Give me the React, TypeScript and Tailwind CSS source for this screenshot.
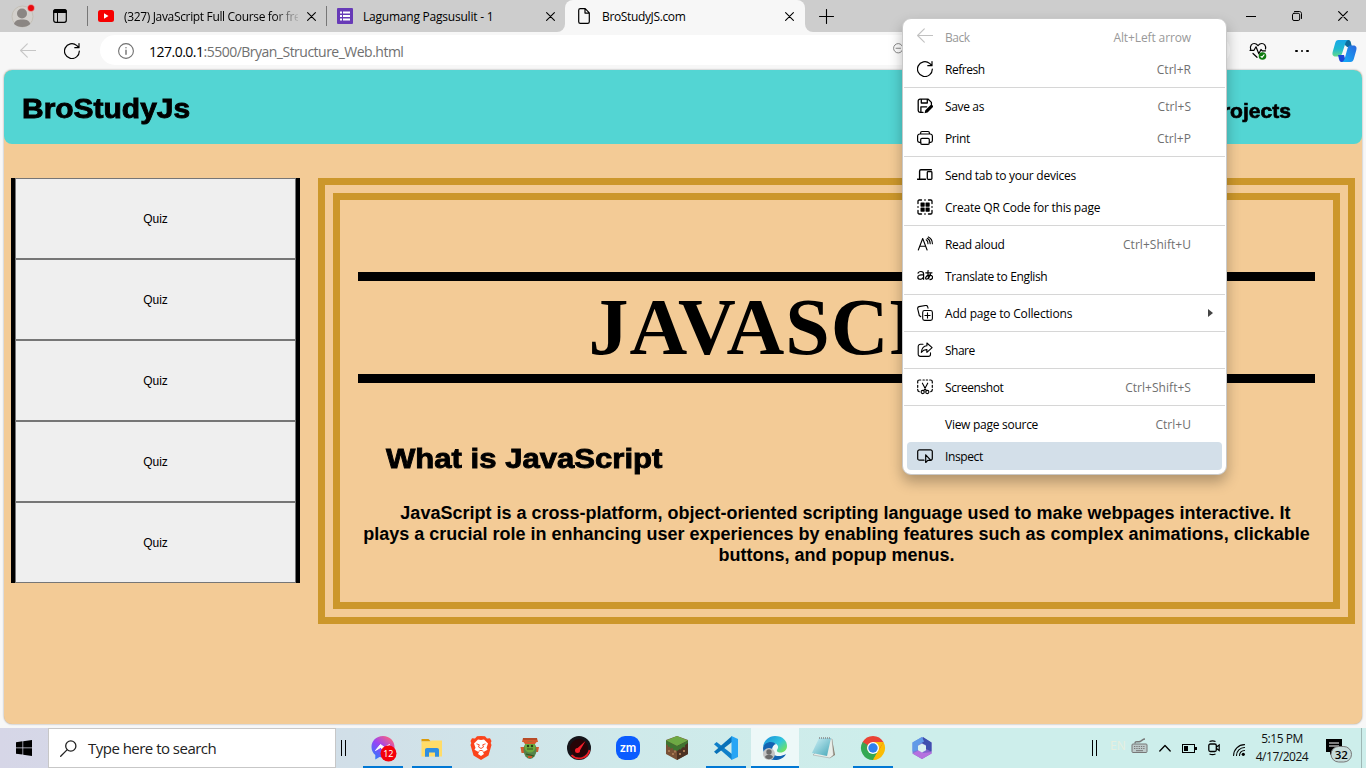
import React from "react";

type IconProps = { children: React.ReactNode; size?: number; className?: string; box?: string };

function Icon({ children, size = 16, className = "", box = "0 0 16 16" }: IconProps) {
  return (
    <svg
      width={size}
      height={size}
      viewBox={box}
      fill="none"
      stroke="currentColor"
      strokeWidth={1.1}
      strokeLinecap="round"
      strokeLinejoin="round"
      className={`block shrink-0 ${className}`}
    >
      {children}
    </svg>
  );
}

const BackIcon = ({ className = "" }) => (
  <Icon className={className}><path d="M15.8 7.5H.6M7.3.9.6 7.5l6.7 6.7" /></Icon>
);
const RefreshIcon = () => (
  <Icon><path d="M15.3 8A7.4 7.4 0 1 1 12.6 2.4l2 1.9M15 .6v4.1h-4.2" strokeWidth={1.2} /></Icon>
);
const CloseIcon = ({ size = 9 }) => (
  <Icon size={size} box="0 0 9 9"><path d="m.6.6 7.8 7.8M8.4.6.6 8.4" strokeWidth={1.1} /></Icon>
);

const icons: Record<string, React.ReactNode> = {
  back: <BackIcon className="-mt-px" />,
  refresh: <RefreshIcon />,
  save: (
    <Icon>
      <path d="M6 14.4H3A1.8 1.8 0 0 1 1.2 12.6V3A1.8 1.8 0 0 1 3 1.2h8.2L14.4 4.4v2.2M4.3 1.4V5h6V1.4M3.9 14V8.8h5.8" strokeWidth={1.3} />
      <path d="m7.500 15.300.8-3 5-5a1.500 1.500 0 0 1 2.200 2.200l-5 5z" fill="currentColor" stroke="none" />
    </Icon>
  ),
  print: (
    <Icon>
      <path d="M3.700 12.400H2.300A1.800 1.800 0 0 1 .6 10.600V6.200A2.200 2.200 0 0 1 2.800 4h10.400a2.200 2.200 0 0 1 2.200 2.200v4.400a1.800 1.800 0 0 1-1.800 1.800h-1.300M3.600 4V2.900a1.400 1.400 0 0 1 1.400-1.400h6a1.400 1.400 0 0 1 1.400 1.400V4" strokeWidth={1.2} />
      <rect x="3.700" y="8.300" width="8.600" height="6.100" rx="1.300" strokeWidth={1.2} />
    </Icon>
  ),
  devices: (
    <Icon>
      <path d="M2.600 11V4.200c0-.9.4-1.500 1.300-1.500H14.400M.5 12.300h8" strokeWidth={1.4} />
      <rect x="10.300" y="4.700" width="4.600" height="7.600" rx=".8" strokeWidth={1.3} />
    </Icon>
  ),
  qr: (
    <Icon>
      <path d="M1 4.500V2.200C1 1.500 1.500 1 2.200 1h2.300M11.500 1h2.300c.7 0 1.200.5 1.200 1.200v2.300M15 11.500v2.300c0 .7-.5 1.200-1.200 1.200h-2.300M4.500 15H2.200C1.500 15 1 14.500 1 13.800v-2.300" strokeWidth={1.3} />
      <path d="M1 7.400v1.200M15 7.400v1.200M7.400 1h1.200M7.400 15h1.200" strokeWidth={1} />
      <g fill="currentColor" stroke="none">
        <rect x="3.500" y="3.500" width="4.200" height="4.200" rx=".6" />
        <rect x="8.500" y="3.500" width="4.200" height="4.200" rx=".6" />
        <rect x="3.500" y="8.500" width="4.200" height="4.200" rx=".6" />
        <rect x="8.500" y="8.500" width="4.200" height="4.200" rx=".6" />
      </g>
    </Icon>
  ),
  read: (
    <Icon>
      <path d="M1.300 14 5.700 2.500 10.100 14M2.800 10.300h5.800M9.200 3.800q1.900 1.200 1.800 4M11.300.9q4.100 1.900 4.100 6.900M10.200 2.300q3 1.600 3 5.400" strokeWidth={1.1} />
    </Icon>
  ),
  translate: (
    <Icon>
      <path d="M1 5.100q.9-1.600 2.900-1.600Q6.600 3.500 6.600 6v5.300M6.600 6.700C3 6.700.8 7.200.8 9.200c0 2.600 4.300 3 5.800-.2M8.800 4.800h6.200M11.100 2.500c-.4 3-.2 5.800.7 8.300M13.500 6c-.5 3-2.500 5.200-4 5.200-1.700 0-1-4 3-4 4.200 0 3.900 3.900.5 4.500" strokeWidth={1.2} />
    </Icon>
  ),
  collections: (
    <Icon>
      <rect x="5.700" y="5.500" width="9.700" height="9.900" rx="1.900" />
      <path d="M10.500 7.900v5.200M7.900 10.500h5.200M3.800 11.700 2.300 10.500.7 3.800A1.900 1.900 0 0 1 2 1.600L8.500.5a1.900 1.900 0 0 1 2.200 1.300l.3 1.400" strokeWidth={1.1} />
    </Icon>
  ),
  share: (
    <Icon>
      <path d="M6 2.200H3.500A2.200 2.200 0 0 0 1.200 4.400v7.800a2.200 2.200 0 0 0 2.200 2.200h7.900a2.200 2.200 0 0 0 2.200-2.200v-1.400M9.900 1l5.200 4.700-5.200 4.700V7.600C7 7.500 5.700 8.500 4.300 10.300 4.700 6.300 6.500 4 9.900 3.700z" strokeWidth={1.1} />
    </Icon>
  ),
  screenshot: (
    <Icon>
      <path d="M.7 4V2.800C.7 1.600 1.300 1 2.500 1H3.700M6 1h1.300M9.300 1h1.300M12.700 1h.8c1.200 0 1.800.6 1.800 1.800V4M15.300 6.300v2M15.300 10.300v.5c0 1-.6 1.700-1.500 1.800M.7 6.300v2M.7 10.300v.5c0 1 .6 1.700 1.500 1.800" strokeWidth={1.2} />
      <path d="m5.400 4.200 4 7.500M10.700 4.200l-4 7.500" strokeWidth={1.1} />
      <circle cx="5.700" cy="13" r="1.600" /><circle cx="10.300" cy="13" r="1.600" />
    </Icon>
  ),
  inspect: (
    <Icon>
      <path d="M7 12.200H2.500a1.800 1.800 0 0 1-1.800-1.800V3.600a1.800 1.800 0 0 1 1.800-1.800h11a1.800 1.800 0 0 1 1.800 1.800v6.800c0 .9-.5 1.500-1.200 1.700" strokeWidth={1.2} />
      <path d="M8.700 6.800v7.700l2.100-2.200h3.100z" strokeWidth={1.2} />
    </Icon>
  ),
};

type Item = { icon?: string; label: string; keys?: string; track: string; ktrack?: string; muted?: boolean; arrow?: boolean; active?: boolean };

const groups: Item[][] = [
  [
    { icon: "back", label: "Back", keys: "Alt+Left arrow", track: "tracking-[-0.5px]", ktrack: "tracking-[-0.12px]", muted: true },
    { icon: "refresh", label: "Refresh", keys: "Ctrl+R", track: "tracking-[-0.48px]" },
  ],
  [
    { icon: "save", label: "Save as", keys: "Ctrl+S", track: "tracking-[-0.35px]" },
    { icon: "print", label: "Print", keys: "Ctrl+P", track: "tracking-[-0.38px]" },
  ],
  [
    { icon: "devices", label: "Send tab to your devices", track: "tracking-[-0.26px]" },
    { icon: "qr", label: "Create QR Code for this page", track: "tracking-[-0.24px]" },
  ],
  [
    { icon: "read", label: "Read aloud", keys: "Ctrl+Shift+U", track: "tracking-[-0.35px]" },
    { icon: "translate", label: "Translate to English", track: "tracking-[-0.35px]" },
  ],
  [{ icon: "collections", label: "Add page to Collections", track: "tracking-[-0.18px]", arrow: true }],
  [{ icon: "share", label: "Share", track: "tracking-[-0.5px]" }],
  [{ icon: "screenshot", label: "Screenshot", keys: "Ctrl+Shift+S", track: "tracking-[-0.42px]" }],
  [
    { label: "View page source", keys: "Ctrl+U", track: "tracking-[-0.27px]" },
    { icon: "inspect", label: "Inspect", track: "tracking-[-0.38px]", active: true },
  ],
];

function ContextMenu() {
  return (
    <div className="absolute left-[902px] top-[18px] z-10 h-[457px] w-[325px] rounded-[9px] border border-[#c9c9c9] bg-white pt-0.5 text-[12px] shadow-[0_7px_14px_rgba(0,0,0,0.28)]">
      {groups.map((group, g) => (
        <div key={g}>
          {g > 0 && <div className="mx-px mb-0.5 mt-0.5 h-px bg-[#d6d6d6]" />}
          {group.map((it) => (
            <div key={it.label} className="h-8 px-1 py-0.5">
              <div className={`flex h-7 items-center rounded pl-2.5 pr-[7px] ${it.active ? "bg-[#d3dfe9]" : ""} ${it.muted ? "text-[#999]" : "text-black"}`}>
                <span className={`mr-3 size-4 ${it.muted ? "opacity-60" : ""}`}>{it.icon && icons[it.icon]}</span>
                <span className={`whitespace-nowrap pt-0.5 ${it.track}`}>{it.label}</span>
                <span className={`ml-auto mr-6 whitespace-nowrap pt-0.5 ${it.muted ? "" : "text-[#707070]"} ${it.ktrack ?? "tracking-[0.04px]"}`}>{it.keys}</span>
                {it.arrow && (
                  <svg width="5" height="8" viewBox="0 0 5 8" className="-ml-[15px] mr-0.5"><path d="M0 0v8l5-4z" fill="#444" /></svg>
                )}
              </div>
            </div>
          ))}
        </div>
      ))}
    </div>
  );
}

function TabStrip() {
  return (
    <div className="flex h-8 bg-[#f7f7f7] text-[12px] text-black">
      <div className="flex w-[565px] items-center rounded-br-lg bg-[#cdcdcd]">
        <svg width="24" height="26" viewBox="0 0 24 26" className="ml-[11px] mr-[17px]">
          <circle cx="11.500" cy="13.500" r="10.500" fill="#d3d0cc" stroke="#c4c0b7" />
          <circle cx="11" cy="10.500" r="5" fill="#8b8683" />
          <path d="M3 21c.8-3.200 3.400-4.500 8.200-4.500s7.300 1.300 8.100 4.500c-2 2-4.700 3-8.100 3s-6-1-8.200-3z" fill="#8b8683" />
          <circle cx="20" cy="5" r="3.500" fill="#e8090e" stroke="#e6d6d6" strokeWidth=".5" />
        </svg>
        <svg width="16" height="16" viewBox="0 0 16 16">
          <rect x="1.700" y="1.700" width="12.600" height="12.600" rx="2" fill="none" stroke="#000" strokeWidth="1.200" />
          <path d="M1.200 5V3A2 2 0 0 1 3 1.200h10A2 2 0 0 1 14.800 3v2z" />
          <path d="M5.500 4v10" stroke="#000" />
        </svg>
        <div className="ml-[19px] h-5 w-px bg-[#777]" />
        <svg width="16" height="12" viewBox="0 0 16 12" className="ml-2.5 mr-2.5">
          <rect width="16" height="12" rx="2.500" fill="#f60000" /><path d="M6 3.200v5.600L10.500 6z" fill="#fff" />
        </svg>
        <span className="w-[174px] overflow-hidden whitespace-nowrap pt-px tracking-[-0.34px] [mask-image:linear-gradient(90deg,#000_150px,transparent_177px)]">(327) JavaScript Full Course for free</span>
        <span className="ml-[9px]"><CloseIcon /></span>
        <div className="ml-2.5 h-5 w-px bg-[#777]" />
        <svg width="16" height="16" viewBox="0 0 16 16" className="ml-2.5 mr-2.5">
          <rect width="16" height="16" rx="1" fill="#673ab7" />
          <path d="M3 4.500h2M6 4.500h7M3 8h2M6 8h7M3 11.500h2M6 11.500h7" stroke="#fff" strokeWidth="2" />
        </svg>
        <span className="w-[170px] whitespace-nowrap pt-px tracking-[-0.22px]">Lagumang Pagsusulit - 1</span>
        <span className="ml-[13px]"><CloseIcon /></span>
      </div>
      <div className="w-60 bg-[linear-gradient(#cdcdcd_12px,#f7f7f7_12px)]">
        <div className="flex h-8 items-center rounded-t-lg bg-[#f7f7f7] pl-[13px]">
          <Icon size={12} box="0 0 12 16" className="h-4"><path d="M.7 2.200c0-1 .6-1.600 1.600-1.600h4.900l4.100 4.200v9c0 1-.6 1.600-1.600 1.600H2.300c-1 0-1.600-.6-1.600-1.600zM7 .8v4.300h4" strokeWidth={1.2} /></Icon>
          <span className="ml-3 w-[171px] pt-px tracking-[-0.36px]">BroStudyJS.com</span>
          <span className="ml-[12px]"><CloseIcon /></span>
        </div>
      </div>
      <div className="flex flex-1 items-center rounded-bl-lg bg-[#cdcdcd] pl-[14px]">
        <Icon size={15} box="0 0 15 15"><path d="M7.500.5v14M.5 7.500h14" strokeWidth={1.1} /></Icon>
        <div className="ml-auto flex items-center pr-[18px]">
          <div className="mr-9 h-px w-2.5 bg-black" />
          <Icon size={10} box="0 0 10 10" className="mr-9"><rect x=".5" y="2.300" width="7.200" height="7.200" rx="1.500" strokeWidth={1} /><path d="M2.500.5h4.900c1.200 0 2.100.9 2.100 2.100v4.900" strokeWidth={1} /></Icon>
          <CloseIcon size={10} />
        </div>
      </div>
    </div>
  );
}

function Toolbar() {
  return (
    <div className="flex h-[38px] items-center bg-[#f7f7f7]">
      <span className="ml-5 text-[#c6c6c6]"><BackIcon /></span>
      <span className="ml-7"><RefreshIcon /></span>
      <div className="-mt-0.5 ml-5 flex h-[30px] w-[1130px] items-center rounded-full bg-white pl-[18px] text-[14px] text-[#707070]">
        <Icon className="mt-0.5"><circle cx="8" cy="8" r="7.400" /><path d="M8 7.200v4M8 4.700v.1" strokeWidth={1.4} /></Icon>
        <span className="ml-[15px] w-[300px] whitespace-nowrap pt-0.5 tracking-[-0.51px]"><span className="text-black">127.0.0.1</span>:5500/Bryan_Structure_Web.html</span>
        <Icon size={12} className="-mt-0.5 ml-[444px]"><circle cx="7" cy="7" r="6.200" /><path d="M4 7h6" /></Icon>
      </div>
      <Icon size={18} box="0 0 18 18" className="-ml-px mr-px translate-x-5">
        <path d="M1.700 7.500C.5 3.700 3 1.500 5.200 1.500c1.700 0 2.700.8 3.800 2.200 1.100-1.400 2.100-2.200 3.800-2.200 2.500 0 4.500 2.300 3.700 5.500M1 8.300h4l2-3.500 2.800 7L12 7.500l1.300 1.300h3.200M4 11.500l4 3.800" strokeWidth={1.2} />
        <circle cx="13.500" cy="14" r="3.800" fill="#0f7b0f" stroke="none" /><path d="m12 14.500 1 .8 2-2.500" stroke="#fff" />
      </Icon>
      <div className="ml-[47px] flex gap-[3px]">
        <i className="size-[2.5px] rounded-full bg-black" /><i className="size-[2.5px] rounded-full bg-black" /><i className="size-[2.5px] rounded-full bg-black" />
      </div>
      <svg width="25" height="24" viewBox="0 0 25 24" className="ml-[23px]">
        <defs>
          <linearGradient id="ca" x1="0" y1="0" x2="0" y2="1"><stop offset="0" stopColor="#19a7e8" /><stop offset=".55" stopColor="#1fb9cf" /><stop offset="1" stopColor="#66d98b" /></linearGradient>
          <linearGradient id="cb" x1="1" y1="0" x2="0" y2="1"><stop offset="0" stopColor="#2a67dc" /><stop offset="1" stopColor="#12b0fa" /></linearGradient>
        </defs>
        <path d="M12 1h4.500c1.700 0 2.200 1.500 2.600 3.500L20 8h-4c-2 0-3.500-2-4-7z" fill="#0b6c9d" />
        <path d="M6.500 1H16c-1.800.6-2.400 2.300-3 4.500l-2.600 8c-.8 2.500-1.700 4-4.200 4H3.500c-3 0-3.500-2.500-2.700-5L3.200 4C3.800 2.200 4.500 1 6.500 1z" fill="url(#ca)" />
        <path d="M6 16h6l2 7H9.500c-2.300 0-2.500-3.500-3.500-7z" fill="#1b46d6" />
        <path d="M18.500 6.500h3c3 0 3.500 2.500 2.700 5L21.800 20c-.6 2-1.600 3-3.300 3H10c1.800-.6 2.400-2.300 3-4.500l2.200-8c.7-2.500 1.300-4 3.300-4z" fill="url(#cb)" />
      </svg>
    </div>
  );
}

function WebPage() {
  return (
    <div className="mx-1 h-[654px] overflow-hidden rounded-lg bg-[#f3cb96] font-['Liberation_Sans',Arial,sans-serif] text-black shadow-[0_0_2px_rgba(0,0,0,0.4)]">
      <header className="flex h-[74px] items-center justify-between rounded-lg bg-[#53d5d3] pl-[18px] pr-[71px] font-bold">
        <h1 className="mt-[3px] origin-left scale-x-[1.07] text-[28px] [-webkit-text-stroke:0.9px_#000]">BroStudyJs</h1>
        <span className="mt-[9px] origin-right scale-x-[1.08] text-[19.5px] [-webkit-text-stroke:0.6px_#000]">Projects</span>
      </header>
      <div className="mt-[34px] flex items-start pl-[7px]">
        <nav className="flex w-[289px] flex-col border-x-4 border-black">
          {[0, 1, 2, 3, 4].map((n) => (
            <button key={n} className="h-[81px] border border-[#767676] bg-[#efefef] text-[12px]">Quiz</button>
          ))}
        </nav>
        <main className="ml-[18px] h-[446px] w-[1037px] border-[22px] border-double border-[#cc972b] px-[18px] pt-[72px] text-center">
          <h2 className="h-[111px] border-y-[9px] border-black font-['Liberation_Serif','Times_New_Roman',serif] text-[80px] font-bold leading-[93px] tracking-[1px]">JAVASCRIPT</h2>
          <h3 className="ml-7 mt-[60px] w-fit origin-left scale-x-[1.11] text-left text-[28px] font-bold leading-8 [-webkit-text-stroke:0.9px_#000]">What is JavaScript</h3>
          <p className="mt-[28px] indent-[18px] text-[18px] font-bold leading-[21px]">
            JavaScript is a cross-platform, object-oriented scripting language used to make webpages interactive. It plays a crucial role in enhancing user experiences by enabling features such as complex animations, clickable buttons, and popup menus.
          </p>
        </main>
      </div>
    </div>
  );
}

const art: { name: string; open?: boolean; active?: boolean; node: React.ReactNode }[] = [
  { name: "messenger", open: true, node: <>
    <defs><linearGradient id="ms" x1="0" y1="1" x2=".8" y2="0"><stop stopColor="#1684ff" /><stop offset=".55" stopColor="#9a43f4" /><stop offset="1" stopColor="#ff637a" /></linearGradient></defs>
    <path d="M12 0C5 0 .5 5 .5 11c0 3.500 1.500 6 3.800 8v4.500L8.500 21c8 2 15-3 15-10C23.500 5 19 0 12 0z" fill="url(#ms)" />
    <path d="m4.500 14.500 5-6 4 3 5-3-5 6-4-3z" fill="#fff" stroke="#fff" />
    <circle cx="17.500" cy="17.500" r="8" fill="#f4000b" />
    <text x="17.300" y="20.800" textAnchor="middle" fontSize="9" fontFamily="Noto Sans" fill="#fff">12</text></> },
  { name: "explorer", open: true, node: <>
    <path d="M1.500 3h7l2.500 2.500H1.500z" fill="#dc9b08" /><path d="M1.500 5.500H10l1.500-1H22v16H1.500z" fill="#ffdc68" />
    <path d="M5 14c0-1.200.8-2 2-2h10c1.200 0 2 .8 2 2v6.800h-4v-4.300H9v4.300H5z" fill="#2f8ee0" /></> },
  { name: "brave", node: <>
    <path d="m12 0-4 .2L6 2.500 3 2.200 1.500 5l.8 2-.8 2 3 10.500L12 24l7.500-4.500 3-10.500-.8-2 .8-2L21 2.200l-3 .3L16 .2z" fill="#fb441c" />
    <path d="m12 4-3-.6-4 4L6.500 11.700l-1 2 4.500 2.600-1 1.700 3 2 3-2-1-1.700 4.500-2.600-1-2L19 7.400l-4-4z" fill="#fff" />
    <path d="m7.500 7.800 2.800 1-.8 2.200L12 12.500 14.500 11l-.8-2.200 2.800-1M9.500 15.300l2.500-1 2.500 1" fill="none" stroke="#fb441c" strokeWidth=".9" /></> },
  { name: "zombie game", node: <>
    <path d="M5 2h14l1 4H4zM2.500 11h4v6h-3zM17 11h4l-1 5h-3z" fill="#d65a2d" /><path d="M5 3h14" stroke="#993d22" />
    <ellipse cx="12" cy="14" rx="6.500" ry="9" fill="#558349" /><circle cx="12" cy="11" r="5.500" fill="#6caa3d" />
    <path d="M5 5.500h14L17 8H7z" fill="#d65a2d" />
    <circle cx="10" cy="10" r="1.200" fill="#253e19" /><circle cx="14" cy="10" r="1.200" fill="#253e19" /><path d="M9 13h6M8 18l8 2" stroke="#38521d" strokeWidth="1.200" /><path d="M10 21h4" stroke="#cf5429" strokeWidth="2" /></> },
  { name: "gauge", node: <>
    <circle cx="12" cy="12" r="12" fill="#141419" /><circle cx="12" cy="12" r="9" fill="#270407" />
    <path d="M4.500 19a10.500 10.500 0 0 0 18-5" fill="none" stroke="#ed1c24" strokeWidth="1.800" />
    <circle cx="10.500" cy="14.500" r="2.500" fill="#f61e29" /><path d="m9.500 13 9-8-6.500 11z" fill="#f61e29" /></> },
  { name: "zoom", node: <>
    <rect width="24" height="24" rx="9" fill="#0b5cff" /><text x="12" y="15.800" textAnchor="middle" fontSize="12.500" fontWeight="700" fontFamily="Lato" fill="#fff">zm</text></> },
  { name: "minecraft", node: <>
    <path d="M12 0 1 4v14l11 6 11-6V4z" fill="#7a5136" /><path d="M12 10v14l11-6V5z" fill="#4c3122" /><path d="M12 0 1 4.500 12 10l11-5.500z" fill="#6da944" />
    <path d="M1 4.500v4l2 .5v2l2-.5v2l3-.5v2l4 1v-5zM12 10v5l3-2v1l3-3 2 .5V9l3-2V4.500z" fill="#3f7430" />
    <path d="M3 14h2v2H3zM7 17h2v2H7zM9 14.500h2v2H9zM14 17h2v2h-2zM18 14h2v2h-2z" fill="#a67852" /></> },
  { name: "code", open: true, node: <>
    <path d="M0 8.200 2.600 6.100 18 18v6z" fill="#0f7fc9" /><path d="M0 15.800 2.600 17.900 18 6V0z" fill="#0871b8" />
    <path d="m17.500 0 6.500 3v18l-6.500 3z" fill="#27a5f5" /></> },
  { name: "edge", active: true, node: <>
    <defs><linearGradient id="eg" x1="0" y1="0" x2="1" y2=".8"><stop stopColor="#168cdb" /><stop offset=".6" stopColor="#31c6dd" /><stop offset="1" stopColor="#72e45a" /></linearGradient></defs>
    <path d="M0 11C1 4 6 0 12 0c8 0 12 5 12 10 0 4-3 6.500-6.500 6.500-3 0-4.500-1.300-3-3.500 2-3-1-6-5-6-4.500 0-8 2-9.500 4z" fill="url(#eg)" />
    <path d="M0 12c1-6 9-8 13-4-5 1-6 11 1 12 4 .5 7-1 9-2-2 4-6.500 6-11 6C5 24 0 18 0 12z" fill="#1263b2" />
    <circle cx="6" cy="18" r="6" fill="#c4c4c4" /><circle cx="6" cy="16" r="2.700" fill="#6b6b6b" /><path d="M2 21c1-3 7-3 8 0-2 3-6 3-8 0z" fill="#6b6b6b" /></> },
  { name: "notepad", node: <>
    <defs><linearGradient id="np" x1="0" y1="0" x2="1" y2="1"><stop stopColor="#d2f2f7" /><stop offset="1" stopColor="#46a7b8" /></linearGradient></defs>
    <path d="m20 3 3 16-5 3z" fill="#857a68" /><path d="m17 3 3 0 1.500 16-3.500 3-17-3z" fill="#e9eee9" stroke="#999" strokeWidth=".5" /><path d="M7 2h12l-4 18L0 17z" fill="url(#np)" /><path d="M7 2h12" stroke="#888" strokeDasharray="1 1" strokeWidth="1.500" /></> },
  { name: "chrome", open: true, node: <>
    <path d="M12 12 1.600 6A12 12 0 0 1 22.400 6z" fill="#ea4335" /><path d="M12 12 12 24A12 12 0 0 1 1.600 6z" fill="#34a853" /><path d="M12 12 22.400 6A12 12 0 0 1 12 24z" fill="#fbbc04" />
    <path d="M12 6h10.400L18 14zM1.600 6l5.200 9 2-7z" fill="#ea4335" /><path d="m6.800 15-5.200-9 5 3zM12 24l5.200-9-6 2z" fill="#34a853" /><path d="m17.200 15-5.200 9 7-8z" fill="#fbbc04" />
    <path d="M22.400 6H12l5.200 9z" fill="#fbbc04" />
    <circle cx="12" cy="12" r="6" fill="#fff" /><circle cx="12" cy="12" r="4.700" fill="#2f80ed" /></> },
  { name: "office", node: <>
    <defs><linearGradient id="of" x1="0" y1="0" x2="1" y2="1"><stop stopColor="#7194eb" /><stop offset="1" stopColor="#8b4fc0" /></linearGradient></defs>
    <path d="m12 1 9.500 5.500v11L12 23l-9.500-5.500v-11z" fill="url(#of)" /><path d="m13 1 8.500 5.500v9L16 13V9l-5-2z" fill="#3e4fae" /><path d="m2.500 17.500 6-3 5 2.500 8-1v1.500L12 23z" fill="#b571df" /><path d="m12 1-9.500 5.500v9L8 14V9l6-3.500z" fill="#609ae7" /><path d="m12 7.500 4 2.300v4.500l-4 2.200-4-2.200V9.800z" fill="#d9f1ef" /></> },
];

const Grip = () => <div className="h-4 w-[5px] border-x border-black" />;

function Taskbar() {
  return (
    <div className="flex h-10 items-center bg-[linear-gradient(90deg,#d6d6e7_0px,#d1dfe8_350px,#cfe9ea_620px,#cdeeeb_900px,#cdeeeb_100%)]">
      <div className="flex w-12 justify-center">
        <svg width="16" height="16" viewBox="0 0 16 16"><path d="m0 2.200 6.500-.9v6.300H0zM7.200 1.200 16 0v7.600H7.200zM0 8.300h6.500v6.300L0 13.700zM7.200 8.300H16V16l-8.800-1.200z" /></svg>
      </div>
      <div className="flex h-10 w-72 items-center border border-[#c7c7c7] bg-white pl-[11px] text-[#222]">
        <Icon size={17} box="0 0 17 17"><circle cx="10.800" cy="6" r="5.100" strokeWidth={1.3} /><path d="m7 9.900-6.300 6.300" strokeWidth={1.3} /></Icon>
        <span className="ml-[11px] pt-px text-[15px] tracking-[-0.52px]">Type here to search</span>
      </div>
      <div className="ml-[5px] mr-px"><Grip /></div>
      <div className="ml-3 flex h-10">
        {art.map((a) => (
          <div key={a.name} className={`flex h-10 w-12 shrink-0 flex-col items-center ${a.active ? "bg-[#edf8f8]" : ""} mr-px`}>
            <svg width="24" height="24" viewBox="0 0 24 24" className="mt-2 overflow-visible">{a.node}</svg>
            {(a.open || a.active) && <div className={`mt-auto h-0.5 bg-[#0078d4] ${a.active ? "w-12" : "w-10"}`} />}
          </div>
        ))}
      </div>
      <div className="ml-auto flex h-10 items-center">
        <Grip />
        <span className="-mt-1 ml-[13px] w-[15px] text-[12px] text-[#e7efdf]">EN</span>
        <svg width="17" height="16" viewBox="0 0 17 16" className="-mt-1 ml-[6px]" fill="none" stroke="#777">
          <path d="M4 5.500c0-3 3-1 5-2s3-2.500 5-2.500" strokeWidth="1.500" /><rect x="1" y="6" width="15" height="8.500" rx="1" fill="#bdcaca" /><path d="M3 8.500h11M3 10.500h11" strokeDasharray="1.300 1" /><path d="M5 12.700h7" />
        </svg>
        <Icon size={12} box="0 0 12 8" className="ml-[11px]"><path d="m.8 7 5.200-5.500L11.200 7" strokeWidth={1.3} /></Icon>
        <svg width="15" height="9" viewBox="0 0 15 9" className="ml-[11px]" shapeRendering="crispEdges"><path d="M.5.5h12v8H.5z" fill="none" stroke="#000" /><path d="M2 2h4v5H2zM13 3h2v3h-2z" /></svg>
        <svg width="12" height="16" viewBox="0 0 12 16" fill="none" stroke="#000" className="ml-[11px]"><rect x=".8" y="4" width="7.500" height="7.500" rx="1.500" strokeWidth="1.300" /><path d="m8.500 7 2.700-2v5.500L8.500 8.500M1.500 1.500q3-1.200 6 0M1.500 14q3 1.200 6 0" strokeWidth="1.200" /></svg>
        <Icon size={12} box="0 0 12 12" className="ml-[13px] mt-1"><path d="M.6 11.500A10.900 10.900 0 0 1 11.500.6M3.500 11.500a8 8 0 0 1 8-8M6.500 11.500a5 5 0 0 1 5-5" /><circle cx="10.300" cy="10.300" r="1.600" fill="#000" stroke="none" /></Icon>
        <div className="ml-[10px] w-[54px] whitespace-nowrap text-center text-[12px] leading-[18px] tracking-[-0.48px] text-[#111]"><div>5:15 PM</div><div>4/17/2024</div></div>
        <div className="ml-[17px] w-[27px]">
          <svg width="27" height="24" viewBox="0 0 27 24" className="mt-1.5">
            <path d="M0 0h16v13H7l-3 3v-3H0z" /><path d="M3 4h10M3 7h10" stroke="#fff" strokeWidth="1.200" />
            <rect x="5" y="7.500" width="20.500" height="15.500" rx="7.700" fill="#c6dcda" stroke="#777" />
            <text x="15.300" y="19.500" textAnchor="middle" fontSize="11.500" fontFamily="Open Sans" fontWeight="600">32</text>
          </svg>
        </div>
        <div className="ml-[8px] mr-1 h-10 w-px bg-[#9eb7b5]" />
      </div>
    </div>
  );
}

export default function App() {
  return (
    <div className="relative flex h-[768px] w-[1366px] flex-col overflow-hidden bg-[#f7f7f7] font-['Open_Sans','Noto_Sans',sans-serif]">
      <TabStrip />
      <Toolbar />
      <WebPage />
      <div className="mt-auto"><Taskbar /></div>
      <ContextMenu />
    </div>
  );
}
